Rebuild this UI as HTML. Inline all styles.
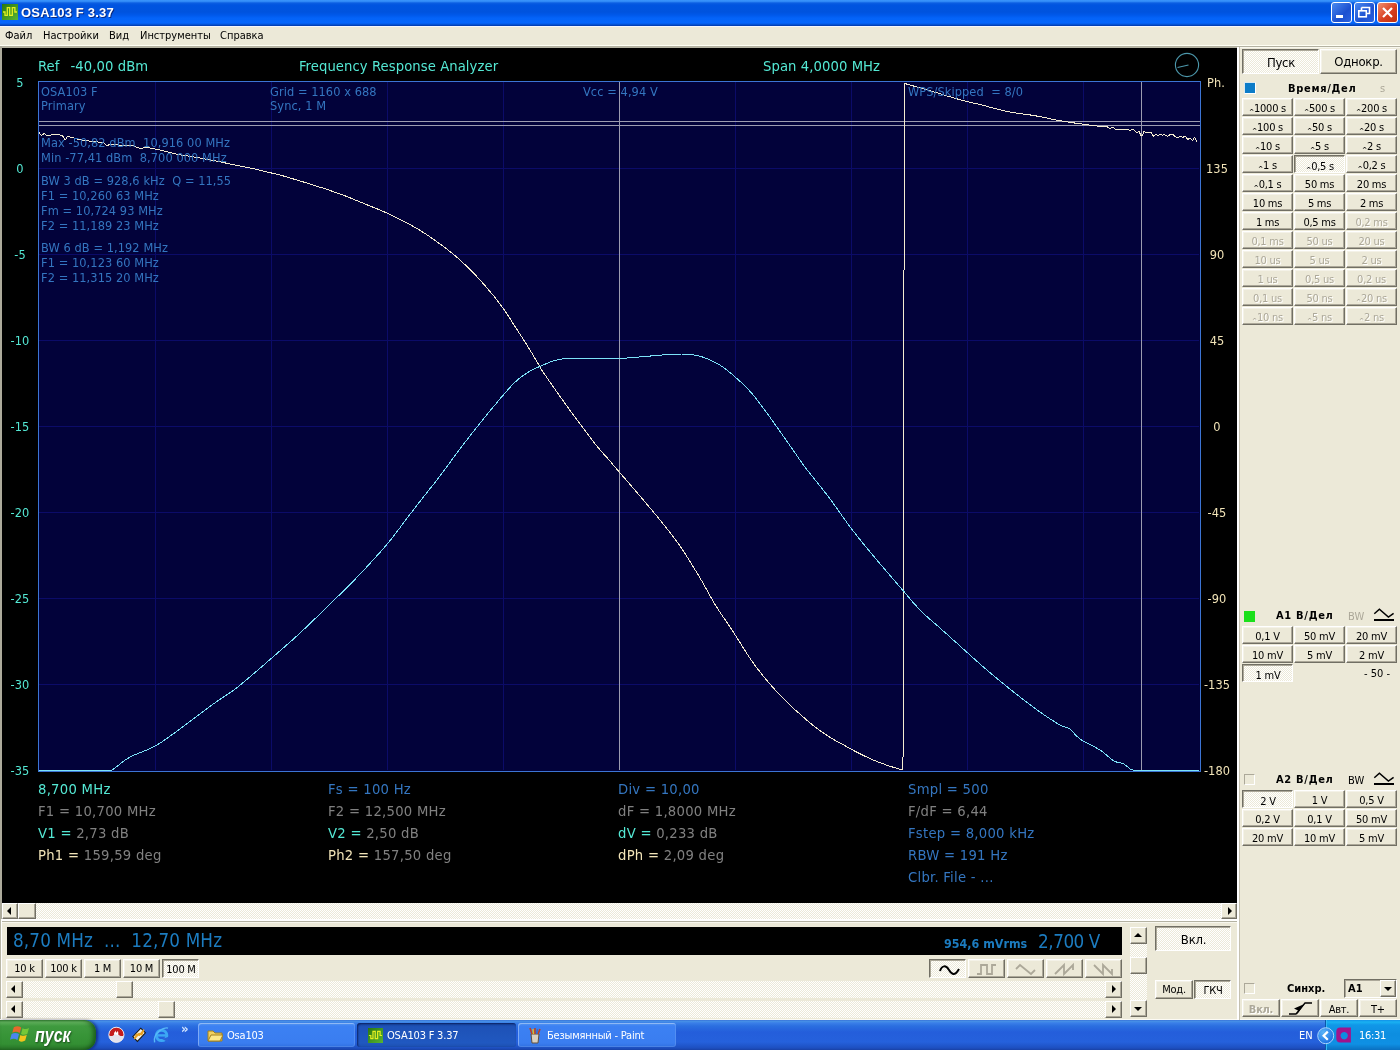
<!DOCTYPE html>
<html lang="ru"><head><meta charset="utf-8"><title>OSA103 F 3.37</title>
<style>
*{box-sizing:border-box;margin:0;padding:0}
html,body{width:1400px;height:1050px;overflow:hidden;background:#ece9d8}
body{position:relative;font-family:"DejaVu Sans Condensed","DejaVu Sans","Liberation Sans",sans-serif;font-size:11px;color:#000}
.abs,.b,.sb,.sbb{position:absolute}
/* title bar */
#title{left:0;top:0;width:1400px;height:26px;background:linear-gradient(#3c96fc 0,#2f88f6 1.5px,#0c5ee2 3px,#0054e0 5px,#0053de 12px,#0058ea 15px,#0463f8 18px,#0566fc 23px,#0452d4 24.5px,#0036a8 26px)}
#title .txt{left:21px;top:5px;color:#fff;font:bold 13px "Liberation Sans",sans-serif;letter-spacing:.2px;text-shadow:1px 1px 0 #0a2a80}
.wb{position:absolute;top:2px;width:21px;height:21px;border:1px solid #fff;border-radius:3px;background:linear-gradient(135deg,#4a8af0,#1c50d0 60%,#2a62e0)}
.wb.x{background:linear-gradient(135deg,#f09070,#d84020 55%,#c03010)}
/* menu */
#menu{left:0;top:26px;width:1400px;height:20px;background:#ece9d8}
#menu span{position:absolute;top:3px}
/* main black */
#scr{left:2px;top:48px;width:1235px;height:855px;background:#000}
svg.plot{position:absolute;left:0;top:0}
/* classic buttons */
.b{letter-spacing:-.25px;background:#ece9d8;border:1px solid;border-color:#fff #716f64 #716f64 #fff;box-shadow:inset -1px -1px 0 #aca899,inset 1px 1px 0 #f4f2e8;text-align:center;white-space:nowrap;font-size:11px;overflow:hidden}
.b.pr{background:#f6f5ee;border-color:#716f64 #fff #fff #716f64;box-shadow:inset 1px 1px 0 #aca899;padding:1px 0 0 1px;background-image:repeating-conic-gradient(#fff 0 25%,#ece9d8 0 50%);background-size:2px 2px}
.b.dis{color:#aca899;text-shadow:1px 1px 0 #fff}
.ca{font-size:7px;font-weight:bold;position:relative;top:2px;margin-right:0}
.lbl{position:absolute;font-weight:bold;font-size:11px;white-space:nowrap;letter-spacing:.35px}
/* scrollbars */
.sb{background-image:repeating-conic-gradient(#fff 0 25%,#ece9d8 0 50%);background-size:2px 2px}
.sbb{background:#ece9d8;border:1px solid;border-color:#fff #716f64 #716f64 #fff;box-shadow:inset -1px -1px 0 #aca899}
.ar{position:absolute;width:0;height:0;border:4px solid transparent}
.ar.l{border-right-color:#000;border-left-width:0;left:4px;top:3px}
.ar.r{border-left-color:#000;border-right-width:0;left:6px;top:3px}
.ar.u{border-bottom-color:#000;border-top-width:0;left:3px;top:5px}
.ar.d{border-top-color:#000;border-bottom-width:0;left:3px;top:6px}
/* taskbar */
#task{left:0;top:1020px;width:1400px;height:30px;background:linear-gradient(#3168d5 0,#4993e6 1px,#3a7fe8 3px,#2b6fe0 6px,#245edb 12px,#2561dc 22px,#1d4fc0 28px,#1941a5 30px)}
#start{left:0;top:0;width:96px;height:30px;border-radius:0 12px 12px 0;background:linear-gradient(#3c8c3c 0,#62b45e 2px,#3f9a3f 6px,#379437 16px,#338f33 24px,#2a772a 30px);box-shadow:inset -3px 0 4px rgba(0,40,0,.5), 2px 0 3px rgba(0,0,60,.5)}
#start .t{position:absolute;left:35px;top:4px;color:#fff;font:italic bold 20px "Liberation Sans",sans-serif;text-shadow:1px 1px 2px #1a4a1a;transform:scaleX(.8);transform-origin:0 0}
.tb{position:absolute;top:3px;height:24px;border-radius:3px;background:linear-gradient(#5a9af0 0,#3c81f3 3px,#3a7df0 20px,#2f6fe0 24px);box-shadow:inset 0 0 0 1px rgba(255,255,255,.12),inset 1px 1px 0 rgba(255,255,255,.25);color:#fff;font-size:11px;line-height:25px;letter-spacing:-.2px;padding-left:29px;white-space:nowrap}
.tb.act{background:linear-gradient(#1848a8 0,#1e52b7 4px,#2058c0 20px,#1c4fb0 24px);box-shadow:inset 1px 1px 2px rgba(0,0,40,.6)}
#tray{left:1325px;top:0;width:75px;height:30px;background:linear-gradient(#1290e8 0,#19b2f2 2px,#1097e8 5px,#0d8ee0 14px,#0f90e4 24px,#0a6fc0 30px);box-shadow:inset 1px 0 0 #0a58a8,inset 2px 0 0 #35b8f4}
#all{position:absolute;left:0;top:0;width:1400px;height:1050px;will-change:transform}
</style></head><body><div id="all">

<!-- title -->
<div id="title" class="abs">
 <svg class="abs" style="left:2px;top:4px" width="16" height="16" viewBox="0 0 16 16"><defs><linearGradient id="ig" x1="0" y1="0" x2="1" y2="1"><stop offset="0" stop-color="#2a7810"/><stop offset="1" stop-color="#58b434"/></linearGradient></defs><rect width="16" height="16" fill="url(#ig)"/><path d="M1 8 H3 V11.400 H5.300 V3.600 H7.700 V11.400 H10.300 V3.600 H12.900 V8 H15" fill="none" stroke="#e6f020" stroke-width="1.300"/></svg>
 <div class="abs txt">OSA103 F 3.37</div>
 <div class="wb" style="left:1331px"><svg width="19" height="19"><rect x="4" y="12" width="7" height="3" fill="#fff"/></svg></div>
 <div class="wb" style="left:1354px"><svg width="19" height="19"><path d="M6.5 4.5 h8 v6 h-3 M6.5 4.5 v3" fill="none" stroke="#fff" stroke-width="1.6"/><rect x="3.8" y="7.8" width="7.5" height="6" fill="none" stroke="#fff" stroke-width="1.6"/></svg></div>
 <div class="wb x" style="left:1377px"><svg width="19" height="19"><path d="M5 5 L14 14 M14 5 L5 14" stroke="#fff" stroke-width="2.2"/></svg></div>
</div>

<!-- menu -->
<div class="abs" style="left:0;top:26px;width:1400px;height:1px;background:#f4f6fc;z-index:2"></div>
<div id="menu" class="abs">
 <span style="left:5px">Файл</span><span style="left:43px">Настройки</span><span style="left:109px">Вид</span><span style="left:140px">Инструменты</span><span style="left:220px">Справка</span>
</div>
<div class="abs" style="left:0;top:45px;width:1400px;height:1px;background:#fffff4"></div>
<div class="abs" style="left:0;top:46px;width:1400px;height:1px;background:#b4b2a2"></div>
<div class="abs" style="left:0;top:47px;width:1237px;height:1px;background:#b4b2a2"></div>
<div class="abs" style="left:1237px;top:47px;width:163px;height:1px;background:#f8f7ee"></div>
<div class="abs" style="left:0;top:46px;width:2px;height:873px;background:#adab9c"></div>
<div class="abs" style="left:0;top:919px;width:1px;height:101px;background:#b8b6a6"></div>
<div class="abs" style="left:1px;top:919px;width:1px;height:101px;background:#fff"></div>
<div class="abs" style="left:0;top:1019px;width:1400px;height:1px;background:#fbfaf4"></div>

<!-- main display -->
<div id="scr" class="abs">
<svg class="plot" width="1236" height="855" viewBox="2 48 1236 855" shape-rendering="crispEdges">
<rect x="39" y="82" width="1161" height="689" fill="#02023a"/>
<rect x="155" y="82" width="1" height="688" fill="#0b0b68"/>
<rect x="271" y="82" width="1" height="688" fill="#0b0b68"/>
<rect x="387" y="82" width="1" height="688" fill="#0b0b68"/>
<rect x="503" y="82" width="1" height="688" fill="#0b0b68"/>
<rect x="619" y="82" width="1" height="688" fill="#0b0b68"/>
<rect x="735" y="82" width="1" height="688" fill="#0b0b68"/>
<rect x="851" y="82" width="1" height="688" fill="#0b0b68"/>
<rect x="967" y="82" width="1" height="688" fill="#0b0b68"/>
<rect x="1083" y="82" width="1" height="688" fill="#0b0b68"/>
<rect x="39" y="168" width="1160" height="1" fill="#0b0b68"/>
<rect x="39" y="254" width="1160" height="1" fill="#0b0b68"/>
<rect x="39" y="340" width="1160" height="1" fill="#0b0b68"/>
<rect x="39" y="426" width="1160" height="1" fill="#0b0b68"/>
<rect x="39" y="512" width="1160" height="1" fill="#0b0b68"/>
<rect x="39" y="598" width="1160" height="1" fill="#0b0b68"/>
<rect x="39" y="684" width="1160" height="1" fill="#0b0b68"/>
<rect x="38.5" y="81.5" width="1162" height="690" fill="none" stroke="#3c74d4" stroke-width="1"/>
<rect x="39" y="121" width="1161" height="1" fill="#9c9cb0"/>
<rect x="39" y="125" width="1161" height="1" fill="#9c9cb0"/>
<rect x="619" y="82" width="1" height="688" fill="#9c9cb0"/>
<rect x="1141" y="82" width="1" height="688" fill="#9c9cb0"/>
<g shape-rendering="crispEdges" fill="none" stroke-width="1" stroke-linejoin="round">
<polyline points="39.0,132.4 41.3,135.4 44.3,133.5 46.5,135.4 51.0,135.0 55.5,134.3 62.3,135.4 65.3,139.9 67.5,136.5 72.0,137.3 78.0,139.5 88.5,141.0 96.0,141.8 103.5,142.5 106.5,145.5 111.0,144.4 122.0,145.2 133.5,145.9 137.3,147.4 141.4,149.0 145.0,147.0 160.0,150.0 178.6,154.6 197.0,157.4 215.7,161.0 234.3,164.8 252.9,168.5 271.4,173.0 280.0,175.0 281.8,175.5 284.1,176.2 286.8,177.0 289.8,177.9 293.1,178.9 296.6,179.9 300.1,180.9 303.5,182.0 306.9,183.0 310.0,184.0 313.0,185.0 316.0,185.9 319.0,186.9 322.0,187.8 325.0,188.8 328.0,189.8 331.0,190.8 334.0,191.9 337.0,192.9 340.0,194.0 343.1,195.1 346.2,196.3 349.4,197.6 352.6,198.9 355.8,200.2 358.9,201.4 361.9,202.7 364.8,203.8 367.5,205.0 370.0,206.0 373.6,207.4 376.5,208.6 379.1,209.6 381.7,210.7 384.6,212.0 388.0,213.6 390.7,214.9 393.6,216.3 396.7,217.8 400.0,219.4 403.3,221.1 406.6,222.8 409.9,224.6 413.0,226.3 416.0,228.0 419.2,229.9 422.4,231.9 425.5,233.9 428.5,235.9 431.5,237.9 434.4,240.0 437.2,242.0 440.0,244.0 443.6,246.6 447.0,249.2 450.2,251.8 453.5,254.4 456.7,257.1 460.0,260.0 463.3,263.1 466.7,266.2 470.0,269.5 473.3,272.9 476.7,276.4 480.0,280.0 482.5,282.8 485.1,285.7 487.7,288.7 490.2,291.8 492.8,294.8 495.3,297.9 497.7,301.0 500.0,304.0 502.2,307.0 504.3,310.0 506.4,313.1 508.4,316.1 510.3,319.1 512.2,322.1 514.1,325.1 516.0,328.0 518.1,331.3 520.3,334.6 522.3,337.8 524.4,341.0 526.3,344.1 528.2,347.1 530.0,350.0 532.3,353.8 534.4,357.4 536.3,360.7 538.2,363.9 540.0,367.0 541.9,370.2 543.6,372.8 545.6,375.7 548.5,380.0 550.3,382.6 552.4,385.6 554.7,388.9 557.2,392.4 559.7,396.0 562.3,399.6 564.7,403.0 567.0,406.2 569.0,409.0 572.1,413.2 574.7,416.8 577.1,420.0 579.5,423.1 582.0,426.5 584.3,429.6 586.6,432.7 589.0,435.9 591.4,439.1 593.7,442.1 596.0,445.0 598.7,448.3 601.4,451.4 604.0,454.4 606.6,457.2 609.0,460.0 611.6,463.0 613.8,465.7 616.3,468.6 619.6,472.4 622.0,475.2 624.7,478.3 627.7,481.7 630.8,485.3 633.9,488.9 637.0,492.5 640.0,496.0 642.5,499.0 645.0,501.9 647.5,504.9 650.0,507.9 652.5,510.8 655.0,513.9 657.5,516.9 660.0,520.0 662.5,523.1 665.0,526.2 667.5,529.3 670.0,532.5 672.5,535.7 675.0,539.0 677.5,542.4 680.0,546.0 682.0,549.0 684.1,552.1 686.1,555.3 688.2,558.6 690.2,561.9 692.3,565.2 694.3,568.5 696.3,571.8 698.2,574.9 700.0,578.0 702.0,581.3 703.8,584.6 705.6,587.8 707.4,590.9 709.1,594.0 710.8,597.1 712.5,600.1 714.2,603.1 716.0,606.0 718.0,609.1 719.9,612.1 721.9,615.0 723.8,617.9 725.8,620.7 727.8,623.7 729.8,626.7 732.0,630.0 733.8,632.8 735.7,635.8 737.7,638.9 739.7,642.1 741.7,645.4 743.7,648.6 745.7,651.7 747.7,654.8 749.6,657.6 751.4,660.3 754.2,664.3 756.9,667.9 759.5,671.3 762.0,674.5 764.5,677.6 767.1,680.7 770.2,684.4 773.4,688.0 776.5,691.4 779.7,694.7 782.8,698.0 786.0,701.2 789.1,704.2 792.3,707.2 795.4,710.1 798.6,712.9 801.7,715.7 804.9,718.5 808.0,721.2 811.2,723.8 814.3,726.3 817.4,728.7 820.5,730.9 823.6,733.1 826.8,735.2 830.0,737.3 833.4,739.4 837.0,741.4 840.5,743.3 844.0,745.2 847.3,747.0 851.0,749.0 854.4,750.9 857.8,752.7 861.4,754.5 864.4,756.0 867.6,757.4 870.7,758.9 873.9,760.3 877.1,761.6 880.3,762.8 883.6,764.0 886.9,765.2 890.0,766.2 892.8,767.1 897.0,768.4 900.6,769.3 903.0,770.0 904.4,83.4 906.2,83.9 908.6,84.6 911.4,85.4 914.6,86.3 918.0,87.2 921.5,88.2 925.0,89.2 928.3,90.2 931.4,91.1 934.7,92.1 937.9,93.1 941.1,94.1 944.3,95.1 947.5,96.1 950.7,97.0 953.9,98.0 957.1,98.9 960.3,99.8 963.5,100.6 966.8,101.4 970.0,102.2 973.2,103.0 976.5,103.7 979.7,104.5 982.9,105.3 986.1,106.1 989.3,107.0 992.5,107.8 995.8,108.7 999.0,109.5 1002.2,110.3 1005.4,111.0 1008.6,111.7 1011.8,112.3 1015.0,112.8 1018.2,113.3 1021.5,113.7 1024.7,114.2 1027.9,114.6 1031.1,115.1 1034.3,115.6 1037.5,116.2 1040.7,116.8 1043.9,117.5 1047.1,118.1 1050.4,118.8 1053.6,119.5 1056.8,120.1 1060.0,120.7 1063.3,121.3 1066.7,121.8 1070.1,122.3 1073.6,122.9 1076.9,123.3 1080.1,123.8 1083.0,124.2 1085.7,124.6 1090.4,125.2 1094.5,125.7 1097.7,126.1 1100.0,126.4 1106.8,126.4 1109.8,128.6 1113.1,127.1 1115.8,129.4 1128.5,129.4 1130.0,130.5 1133.0,129.2 1136.8,132.8 1139.0,131.3 1140.9,135.4 1142.4,135.4 1143.9,131.3 1145.8,132.4 1151.0,132.4 1153.6,136.5 1155.5,134.6 1157.8,135.4 1160.8,134.3 1162.3,135.4 1163.8,134.3 1167.5,136.5 1170.5,134.3 1172.8,134.4 1175.0,136.5 1177.3,137.6 1181.0,136.1 1182.5,137.6 1185.1,136.1 1187.8,139.5 1190.0,138.0 1192.6,140.6 1194.5,137.3 1196.8,141.8" stroke="#f4ecd0"/>
<polyline points="39.0,770.0 112.0,770.0 114.3,768.6 116.3,767.0 119.0,764.8 122.2,762.2 126.0,759.5 130.0,757.0 132.7,755.6 135.7,754.4 138.8,753.1 142.0,751.9 145.4,750.6 148.8,749.1 152.3,747.5 155.7,745.7 158.8,743.9 161.9,741.9 165.0,739.7 168.2,737.5 171.4,735.2 174.7,732.8 177.9,730.4 181.1,728.0 184.3,725.7 187.5,723.4 190.8,720.9 194.0,718.5 197.3,716.0 200.6,713.5 203.8,711.1 206.9,708.7 210.0,706.4 212.9,704.3 216.5,701.7 220.0,699.4 223.4,697.1 226.6,694.9 229.8,692.8 232.8,690.7 235.7,688.6 239.5,685.7 242.8,682.9 246.1,680.2 249.4,677.3 252.9,674.3 256.0,671.7 259.1,669.0 262.4,666.2 265.7,663.3 269.2,660.2 272.9,657.0 275.8,654.5 278.9,651.8 282.0,649.1 285.2,646.3 288.5,643.4 291.9,640.4 295.2,637.4 298.6,634.3 301.6,631.5 304.7,628.6 307.9,625.6 311.0,622.5 314.2,619.5 317.4,616.4 320.6,613.2 323.8,610.1 327.0,607.0 330.2,603.9 333.3,600.9 336.4,597.8 339.6,594.8 342.7,591.7 345.9,588.5 349.1,585.3 352.4,582.0 355.7,578.6 358.5,575.7 361.3,572.7 364.3,569.6 367.2,566.4 370.2,563.2 373.2,559.9 376.1,556.7 379.0,553.5 381.8,550.4 384.5,547.3 387.0,544.3 389.6,541.1 392.2,538.0 394.6,534.8 396.9,531.8 399.2,528.8 401.4,525.8 403.6,522.8 405.7,520.0 407.9,517.1 410.0,514.3 412.7,510.8 415.5,507.2 418.3,503.6 421.0,500.1 423.6,496.8 426.0,493.7 428.1,491.0 430.0,488.6 433.0,485.1 437.0,480.0 438.6,477.8 440.5,475.3 442.7,472.4 445.0,469.2 447.4,465.9 450.0,462.4 452.6,458.8 455.3,455.2 458.0,451.5 460.7,448.0 463.2,444.6 465.7,441.4 468.3,438.0 471.0,434.6 473.7,431.1 476.5,427.7 479.2,424.2 481.9,420.9 484.5,417.6 487.1,414.4 489.6,411.4 492.0,408.4 494.3,405.7 497.7,401.7 500.8,397.9 503.8,394.4 506.6,391.2 509.3,388.2 511.8,385.4 514.3,382.9 518.3,379.2 521.8,376.5 525.2,374.2 528.6,372.0 532.2,370.0 535.8,368.2 539.3,366.6 542.9,365.1 546.4,363.6 549.8,362.2 553.3,361.0 557.0,360.0 559.8,359.4 562.3,359.0 565.2,358.7 569.0,358.5 574.3,358.3 576.5,358.3 579.1,358.2 581.8,358.2 584.7,358.2 587.9,358.3 591.1,358.3 594.4,358.3 597.8,358.4 601.2,358.4 604.6,358.4 607.9,358.4 611.1,358.4 614.3,358.4 617.2,358.4 620.0,358.3 623.6,358.2 627.2,358.0 630.6,357.7 634.0,357.5 637.3,357.2 640.5,356.9 643.6,356.7 646.5,356.4 649.3,356.1 651.9,355.9 654.3,355.7 658.8,355.3 662.4,355.0 665.4,354.7 668.2,354.5 671.4,354.3 674.9,354.2 678.4,354.1 681.9,354.0 685.3,354.1 688.6,354.3 692.3,354.7 695.8,355.2 699.2,356.0 702.9,357.1 706.1,358.3 709.5,359.7 713.0,361.3 716.5,363.1 720.0,365.1 723.4,367.4 726.9,370.1 730.4,372.9 733.8,375.8 737.0,378.6 740.8,382.0 744.4,385.4 747.9,389.0 751.4,392.9 753.8,395.7 756.2,398.7 758.6,401.8 760.9,405.0 763.3,408.2 765.7,411.4 768.1,414.7 770.5,418.0 772.9,421.4 775.3,424.8 777.7,428.1 780.0,431.4 782.2,434.6 784.4,437.7 786.6,440.8 788.7,443.9 790.9,447.0 793.0,450.0 795.0,452.9 796.9,455.6 798.7,458.4 800.7,461.2 803.0,464.4 805.7,468.0 807.8,470.7 810.1,473.7 812.6,476.8 815.2,480.0 817.9,483.3 820.6,486.7 823.3,490.2 826.0,493.6 828.6,497.0 830.9,500.1 833.2,503.2 835.4,506.4 837.7,509.6 840.0,512.8 842.3,516.1 844.6,519.3 846.8,522.4 849.1,525.6 851.4,528.6 853.9,531.9 856.4,535.1 858.9,538.2 861.4,541.4 863.9,544.4 866.5,547.5 869.0,550.6 871.6,553.8 874.3,557.0 876.8,560.0 879.4,563.0 882.0,566.1 884.7,569.2 887.3,572.3 890.0,575.4 892.6,578.5 895.2,581.4 897.6,584.3 900.0,587.0 903.2,590.7 906.1,594.2 909.0,597.6 911.7,600.9 914.5,604.0 917.2,607.0 920.0,610.0 923.3,613.3 926.7,616.4 930.0,619.3 933.3,622.2 936.7,625.1 940.0,628.0 943.3,631.0 946.7,634.0 950.0,637.0 953.3,640.0 956.7,643.0 960.0,646.0 963.3,649.0 966.7,652.0 970.0,655.1 973.3,658.1 976.7,661.1 980.0,664.0 983.3,666.9 986.7,669.8 990.0,672.6 993.3,675.4 996.7,678.2 1000.0,681.0 1003.3,683.7 1006.7,686.4 1010.0,689.1 1013.3,691.8 1016.7,694.4 1020.0,697.0 1023.3,699.6 1026.7,702.1 1030.0,704.7 1033.3,707.2 1036.7,709.6 1040.0,712.0 1043.4,714.4 1047.0,716.8 1050.6,719.2 1054.1,721.4 1057.2,723.4 1060.0,725.0 1064.1,726.8 1067.0,727.6 1070.0,729.0 1073.0,731.9 1075.9,735.4 1080.0,739.0 1082.8,740.8 1086.1,742.6 1089.8,744.4 1093.4,746.3 1096.9,748.2 1100.0,750.0 1104.0,752.9 1107.6,756.0 1110.9,758.8 1114.0,761.0 1117.8,762.5 1121.1,763.1 1124.0,764.0 1127.4,766.6 1130.0,769.0 1133.0,770.0 1199.0,770.0" stroke="#7ce2f8" stroke-width="1"/>
</g><g shape-rendering="auto" fill="none">
<circle cx="1187" cy="65" r="11.6" stroke="#4c98ac" stroke-width="1.1"/>
<path d="M1177.500 67.500 L1188.500 65" stroke="#4c98ac" stroke-width="1.1"/>
</g>
<g font-family='&quot;DejaVu Sans Condensed&quot;,&quot;DejaVu Sans&quot;,&quot;Liberation Sans&quot;,sans-serif' shape-rendering="auto" letter-spacing="0.08">
<text x="38" y="71" fill="#54e8d4" font-size="14.67" text-anchor="start" >Ref</text>
<text x="70.5" y="71" fill="#54e8d4" font-size="14.67" text-anchor="start" >-40,00 dBm</text>
<text x="299" y="71" fill="#54e8d4" font-size="14.67" text-anchor="start" >Frequency Response Analyzer</text>
<text x="763" y="71" fill="#54e8d4" font-size="14.67" text-anchor="start" >Span 4,0000 MHz</text>
<text x="20" y="87" fill="#54e8d4" font-size="12.67" text-anchor="middle" >5</text>
<text x="20" y="173" fill="#54e8d4" font-size="12.67" text-anchor="middle" >0</text>
<text x="20" y="259" fill="#54e8d4" font-size="12.67" text-anchor="middle" >-5</text>
<text x="20" y="345" fill="#54e8d4" font-size="12.67" text-anchor="middle" >-10</text>
<text x="20" y="431" fill="#54e8d4" font-size="12.67" text-anchor="middle" >-15</text>
<text x="20" y="517" fill="#54e8d4" font-size="12.67" text-anchor="middle" >-20</text>
<text x="20" y="603" fill="#54e8d4" font-size="12.67" text-anchor="middle" >-25</text>
<text x="20" y="689" fill="#54e8d4" font-size="12.67" text-anchor="middle" >-30</text>
<text x="20" y="775" fill="#54e8d4" font-size="12.67" text-anchor="middle" >-35</text>
<text x="1207" y="87" fill="#f2e4b8" font-size="12.67" text-anchor="start" >Ph.</text>
<text x="1217" y="173" fill="#f2e4b8" font-size="12.67" text-anchor="middle" >135</text>
<text x="1217" y="259" fill="#f2e4b8" font-size="12.67" text-anchor="middle" >90</text>
<text x="1217" y="345" fill="#f2e4b8" font-size="12.67" text-anchor="middle" >45</text>
<text x="1217" y="431" fill="#f2e4b8" font-size="12.67" text-anchor="middle" >0</text>
<text x="1217" y="517" fill="#f2e4b8" font-size="12.67" text-anchor="middle" >-45</text>
<text x="1217" y="603" fill="#f2e4b8" font-size="12.67" text-anchor="middle" >-90</text>
<text x="1217" y="689" fill="#f2e4b8" font-size="12.67" text-anchor="middle" >-135</text>
<text x="1217" y="775" fill="#f2e4b8" font-size="12.67" text-anchor="middle" >-180</text>
<text x="41" y="96" fill="#3476c0" font-size="12.67" text-anchor="start" >OSA103 F</text>
<text x="41" y="110" fill="#3476c0" font-size="12.67" text-anchor="start" >Primary</text>
<text x="270" y="96" fill="#3476c0" font-size="12.67" text-anchor="start" >Grid = 1160 x 688</text>
<text x="270" y="110" fill="#3476c0" font-size="12.67" text-anchor="start" >Sync, 1 M</text>
<text x="583" y="96" fill="#3476c0" font-size="12.67" text-anchor="start" >Vcc = 4,94 V</text>
<text x="908" y="96" fill="#3476c0" font-size="12.67" text-anchor="start" >WPS/Skipped&#160; = 8/0</text>
<text x="41" y="147" fill="#3476c0" font-size="12.67" text-anchor="start" >Max -50,82 dBm&#160; 10,916 00 MHz</text>
<text x="41" y="162" fill="#3476c0" font-size="12.67" text-anchor="start" >Min -77,41 dBm&#160; 8,700 000 MHz</text>
<text x="41" y="185" fill="#3476c0" font-size="12.67" text-anchor="start" >BW 3 dB = 928,6 kHz&#160; Q = 11,55</text>
<text x="41" y="200" fill="#3476c0" font-size="12.67" text-anchor="start" >F1 = 10,260 63 MHz</text>
<text x="41" y="215" fill="#3476c0" font-size="12.67" text-anchor="start" >Fm = 10,724 93 MHz</text>
<text x="41" y="230" fill="#3476c0" font-size="12.67" text-anchor="start" >F2 = 11,189 23 MHz</text>
<text x="41" y="252" fill="#3476c0" font-size="12.67" text-anchor="start" >BW 6 dB = 1,192 MHz</text>
<text x="41" y="267" fill="#3476c0" font-size="12.67" text-anchor="start" >F1 = 10,123 60 MHz</text>
<text x="41" y="282" fill="#3476c0" font-size="12.67" text-anchor="start" >F2 = 11,315 20 MHz</text>
<text x="38" y="794" fill="#54e8d4" font-size="14.67" text-anchor="start" letter-spacing="0.27">8,700 MHz</text>
<text x="38" y="816" fill="#808080" font-size="14.67" text-anchor="start" letter-spacing="0.27">F1 = 10,700 MHz</text>
<text x="38" y="838" fill="#808080" font-size="14.67" text-anchor="start" letter-spacing="0.27"><tspan fill="#54e8d4">V1 =</tspan> 2,73 dB</text>
<text x="38" y="860" fill="#808080" font-size="14.67" text-anchor="start" letter-spacing="0.27"><tspan fill="#f2e4b8">Ph1 =</tspan> 159,59 deg</text>
<text x="328" y="794" fill="#3476c0" font-size="14.67" text-anchor="start" letter-spacing="0.27">Fs = 100 Hz</text>
<text x="328" y="816" fill="#808080" font-size="14.67" text-anchor="start" letter-spacing="0.27">F2 = 12,500 MHz</text>
<text x="328" y="838" fill="#808080" font-size="14.67" text-anchor="start" letter-spacing="0.27"><tspan fill="#54e8d4">V2 =</tspan> 2,50 dB</text>
<text x="328" y="860" fill="#808080" font-size="14.67" text-anchor="start" letter-spacing="0.27"><tspan fill="#f2e4b8">Ph2 =</tspan> 157,50 deg</text>
<text x="618" y="794" fill="#3476c0" font-size="14.67" text-anchor="start" letter-spacing="0.27">Div = 10,00</text>
<text x="618" y="816" fill="#808080" font-size="14.67" text-anchor="start" letter-spacing="0.27">dF = 1,8000 MHz</text>
<text x="618" y="838" fill="#808080" font-size="14.67" text-anchor="start" letter-spacing="0.27"><tspan fill="#54e8d4">dV =</tspan> 0,233 dB</text>
<text x="618" y="860" fill="#808080" font-size="14.67" text-anchor="start" letter-spacing="0.27"><tspan fill="#f2e4b8">dPh =</tspan> 2,09 deg</text>
<text x="908" y="794" fill="#3476c0" font-size="14.67" text-anchor="start" letter-spacing="0.27">Smpl = 500</text>
<text x="908" y="816" fill="#808080" font-size="14.67" text-anchor="start" letter-spacing="0.27">F/dF = 6,44</text>
<text x="908" y="838" fill="#3476c0" font-size="14.67" text-anchor="start" letter-spacing="0.27">Fstep = 8,000 kHz</text>
<text x="908" y="860" fill="#3476c0" font-size="14.67" text-anchor="start" letter-spacing="0.27">RBW = 191 Hz</text>
<text x="908" y="882" fill="#3476c0" font-size="14.67" text-anchor="start" letter-spacing="0.27">Clbr. File - ...</text>
</g>
</svg>
</div>

<!-- horizontal scrollbar under display -->
<div class="sb" style="left:2px;top:903px;width:1235px;height:16px"></div>
<div class="sbb" style="left:2px;top:903px;width:16px;height:16px"><i class="ar l"></i></div>
<div class="sbb" style="left:18px;top:903px;width:18px;height:16px"></div>
<div class="sbb" style="left:1221px;top:903px;width:16px;height:16px"><i class="ar r"></i></div>
<div class="abs" style="left:2px;top:919px;width:1236px;height:2px;background:#fff"></div>
<div class="abs" style="left:2px;top:921px;width:1236px;height:1px;background:#b4b2a2"></div>
<div class="abs" style="left:2px;top:922px;width:1236px;height:1px;background:#f8f7ee"></div>

<!-- generator panel -->
<div class="abs" style="left:7px;top:927px;width:1115px;height:28px;background:#000"></div>
<div class="abs" style="left:13px;top:930px;color:#1c7cc0;font-size:18.7px;letter-spacing:.15px;white-space:nowrap">8,70 MHz&#160; ...&#160; 12,70 MHz</div>
<div class="abs" style="left:944px;top:936px;color:#1c7cc0;font-size:12.4px;font-weight:bold;white-space:nowrap">954,6 mVrms</div>
<div class="abs" style="left:1038px;top:931px;color:#1c7cc0;font-size:18.7px;letter-spacing:-.45px;white-space:nowrap">2,700 V</div>

<div class="b" style="left:6px;top:959px;width:37px;height:19px;line-height:17px">10 k</div>
<div class="b" style="left:45px;top:959px;width:37px;height:19px;line-height:17px">100 k</div>
<div class="b" style="left:84px;top:959px;width:37px;height:19px;line-height:17px">1 M</div>
<div class="b" style="left:123px;top:959px;width:37px;height:19px;line-height:17px">10 M</div>
<div class="b pr" style="left:162px;top:959px;width:37px;height:19px;line-height:17px">100 M</div>

<!-- waveform buttons -->
<div class="b pr" style="left:929px;top:959px;width:37px;height:19px"><svg width="35" height="18"><path d="M9 10 C11 4,15 4,18 9 S24 15,28 8" fill="none" stroke="#000" stroke-width="2"/></svg></div>
<div class="b" style="left:968px;top:959px;width:37px;height:19px"><svg width="35" height="18"><path d="M8 14 h4 v-9 h6 v9 h5 v-9 h4" fill="none" stroke="#aca899" stroke-width="1.8"/></svg></div>
<div class="b" style="left:1007px;top:959px;width:37px;height:19px"><svg width="35" height="18"><path d="M8 9 l4 -4 l11 9 l4 -4" fill="none" stroke="#aca899" stroke-width="1.8"/></svg></div>
<div class="b" style="left:1046px;top:959px;width:37px;height:19px"><svg width="35" height="18"><path d="M8 14 l9 -9 v9 l9 -9 v5" fill="none" stroke="#aca899" stroke-width="1.8"/></svg></div>
<div class="b" style="left:1085px;top:959px;width:37px;height:19px"><svg width="35" height="18"><path d="M8 5 l9 9 v-9 l9 9 v-5" fill="none" stroke="#aca899" stroke-width="1.8"/></svg></div>

<!-- two scrollbars -->
<div class="sb" style="left:6px;top:981px;width:1116px;height:17px"></div>
<div class="sbb" style="left:6px;top:981px;width:17px;height:17px"><i class="ar l"></i></div>
<div class="sbb" style="left:116px;top:981px;width:17px;height:17px"></div>
<div class="sbb" style="left:1105px;top:981px;width:17px;height:17px"><i class="ar r"></i></div>
<div class="sb" style="left:6px;top:1001px;width:1116px;height:17px"></div>
<div class="sbb" style="left:6px;top:1001px;width:17px;height:17px"><i class="ar l"></i></div>
<div class="sbb" style="left:158px;top:1001px;width:17px;height:17px"></div>
<div class="sbb" style="left:1105px;top:1001px;width:17px;height:17px"><i class="ar r"></i></div>

<!-- vertical scrollbar -->
<div class="sb" style="left:1130px;top:927px;width:17px;height:90px"></div>
<div class="sbb" style="left:1130px;top:927px;width:17px;height:17px"><i class="ar u"></i></div>
<div class="sbb" style="left:1130px;top:957px;width:17px;height:17px"></div>
<div class="sbb" style="left:1130px;top:1000px;width:17px;height:17px"><i class="ar d"></i></div>

<div class="b pr" style="left:1155px;top:926px;width:76px;height:25px;line-height:23px;font-size:13px">Вкл.</div>
<div class="b" style="left:1155px;top:980px;width:38px;height:19px;line-height:17px">Мод.</div>
<div class="b pr" style="left:1194px;top:980px;width:37px;height:19px;line-height:17px">ГКЧ</div>

<!-- right panel -->
<div class="abs" style="left:1237px;top:47px;width:2px;height:973px;background:#fff"></div>
<div class="abs" style="left:1239px;top:47px;width:1px;height:973px;background:#c4c0b0"></div>
<div class="b pr" style="left:1242px;top:49px;width:77px;height:25px;line-height:23px;font-size:13px">Пуск</div>
<div class="b" style="left:1320px;top:49px;width:77px;height:25px;line-height:23px;font-size:13px">Однокр.</div>
<div class="abs" style="left:1244px;top:82px;width:12px;height:12px;background:#0c7cc8;border:1px solid;border-color:#d8e8f0 #fff #fff #d8e8f0"></div>
<div class="lbl" style="left:1288px;top:82px;letter-spacing:.7px">Время/Дел</div>
<div class="abs" style="left:1380px;top:82px;color:#aca899">s</div>
<div class="b " style="left:1242px;top:98px;width:51px;height:18px;line-height:19px"><span class="ca">^</span>1000 s</div>
<div class="b " style="left:1294px;top:98px;width:51px;height:18px;line-height:19px"><span class="ca">^</span>500 s</div>
<div class="b " style="left:1346px;top:98px;width:51px;height:18px;line-height:19px"><span class="ca">^</span>200 s</div>
<div class="b " style="left:1242px;top:117px;width:51px;height:18px;line-height:19px"><span class="ca">^</span>100 s</div>
<div class="b " style="left:1294px;top:117px;width:51px;height:18px;line-height:19px"><span class="ca">^</span>50 s</div>
<div class="b " style="left:1346px;top:117px;width:51px;height:18px;line-height:19px"><span class="ca">^</span>20 s</div>
<div class="b " style="left:1242px;top:136px;width:51px;height:18px;line-height:19px"><span class="ca">^</span>10 s</div>
<div class="b " style="left:1294px;top:136px;width:51px;height:18px;line-height:19px"><span class="ca">^</span>5 s</div>
<div class="b " style="left:1346px;top:136px;width:51px;height:18px;line-height:19px"><span class="ca">^</span>2 s</div>
<div class="b " style="left:1242px;top:155px;width:51px;height:18px;line-height:19px"><span class="ca">^</span>1 s</div>
<div class="b pr" style="left:1294px;top:155px;width:51px;height:18px;line-height:19px"><span class="ca">^</span>0,5 s</div>
<div class="b " style="left:1346px;top:155px;width:51px;height:18px;line-height:19px"><span class="ca">^</span>0,2 s</div>
<div class="b " style="left:1242px;top:174px;width:51px;height:18px;line-height:19px"><span class="ca">^</span>0,1 s</div>
<div class="b " style="left:1294px;top:174px;width:51px;height:18px;line-height:19px">50 ms</div>
<div class="b " style="left:1346px;top:174px;width:51px;height:18px;line-height:19px">20 ms</div>
<div class="b " style="left:1242px;top:193px;width:51px;height:18px;line-height:19px">10 ms</div>
<div class="b " style="left:1294px;top:193px;width:51px;height:18px;line-height:19px">5 ms</div>
<div class="b " style="left:1346px;top:193px;width:51px;height:18px;line-height:19px">2 ms</div>
<div class="b " style="left:1242px;top:212px;width:51px;height:18px;line-height:19px">1 ms</div>
<div class="b " style="left:1294px;top:212px;width:51px;height:18px;line-height:19px">0,5 ms</div>
<div class="b dis" style="left:1346px;top:212px;width:51px;height:18px;line-height:19px">0,2 ms</div>
<div class="b dis" style="left:1242px;top:231px;width:51px;height:18px;line-height:19px">0,1 ms</div>
<div class="b dis" style="left:1294px;top:231px;width:51px;height:18px;line-height:19px">50 us</div>
<div class="b dis" style="left:1346px;top:231px;width:51px;height:18px;line-height:19px">20 us</div>
<div class="b dis" style="left:1242px;top:250px;width:51px;height:18px;line-height:19px">10 us</div>
<div class="b dis" style="left:1294px;top:250px;width:51px;height:18px;line-height:19px">5 us</div>
<div class="b dis" style="left:1346px;top:250px;width:51px;height:18px;line-height:19px">2 us</div>
<div class="b dis" style="left:1242px;top:269px;width:51px;height:18px;line-height:19px">1 us</div>
<div class="b dis" style="left:1294px;top:269px;width:51px;height:18px;line-height:19px">0,5 us</div>
<div class="b dis" style="left:1346px;top:269px;width:51px;height:18px;line-height:19px">0,2 us</div>
<div class="b dis" style="left:1242px;top:288px;width:51px;height:18px;line-height:19px">0,1 us</div>
<div class="b dis" style="left:1294px;top:288px;width:51px;height:18px;line-height:19px">50 ns</div>
<div class="b dis" style="left:1346px;top:288px;width:51px;height:18px;line-height:19px"><span class="ca">^</span>20 ns</div>
<div class="b dis" style="left:1242px;top:307px;width:51px;height:18px;line-height:19px"><span class="ca">^</span>10 ns</div>
<div class="b dis" style="left:1294px;top:307px;width:51px;height:18px;line-height:19px"><span class="ca">^</span>5 ns</div>
<div class="b dis" style="left:1346px;top:307px;width:51px;height:18px;line-height:19px"><span class="ca">^</span>2 ns</div>
<div class="b " style="left:1242px;top:626px;width:51px;height:18px;line-height:19px">0,1 V</div>
<div class="b " style="left:1294px;top:626px;width:51px;height:18px;line-height:19px">50 mV</div>
<div class="b " style="left:1346px;top:626px;width:51px;height:18px;line-height:19px">20 mV</div>
<div class="b " style="left:1242px;top:645px;width:51px;height:18px;line-height:19px">10 mV</div>
<div class="b " style="left:1294px;top:645px;width:51px;height:18px;line-height:19px">5 mV</div>
<div class="b " style="left:1346px;top:645px;width:51px;height:18px;line-height:19px">2 mV</div>
<div class="b pr" style="left:1242px;top:664px;width:51px;height:18px;line-height:19px">1 mV</div>
<div class="b pr" style="left:1242px;top:790px;width:51px;height:18px;line-height:19px">2 V</div>
<div class="b " style="left:1294px;top:790px;width:51px;height:18px;line-height:19px">1 V</div>
<div class="b " style="left:1346px;top:790px;width:51px;height:18px;line-height:19px">0,5 V</div>
<div class="b " style="left:1242px;top:809px;width:51px;height:18px;line-height:19px">0,2 V</div>
<div class="b " style="left:1294px;top:809px;width:51px;height:18px;line-height:19px">0,1 V</div>
<div class="b " style="left:1346px;top:809px;width:51px;height:18px;line-height:19px">50 mV</div>
<div class="b " style="left:1242px;top:828px;width:51px;height:18px;line-height:19px">20 mV</div>
<div class="b " style="left:1294px;top:828px;width:51px;height:18px;line-height:19px">10 mV</div>
<div class="b " style="left:1346px;top:828px;width:51px;height:18px;line-height:19px">5 mV</div>
<div class="abs" style="left:1244px;top:611px;width:11px;height:11px;background:#1be01b"></div>
<div class="lbl" style="left:1276px;top:609px;letter-spacing:.7px">A1 В/Дел</div>
<div class="abs" style="left:1348px;top:610px;color:#aca899">BW</div>
<svg class="abs" style="left:1373px;top:607px" width="22" height="14"><path d="M1.300 6.700 L6.400 2.200 L15.400 10.100 L20.600 6.300" fill="none" stroke="#000" stroke-width="1.500"/><path d="M1 13 h20" stroke="#000" stroke-width="2"/></svg>
<div class="abs" style="left:1364px;top:667px">- 50 -</div>

<div class="abs" style="left:1244px;top:774px;width:11px;height:11px;border:1px solid;border-color:#aca899 #fff #fff #aca899;background:#ece9d8"></div>
<div class="lbl" style="left:1276px;top:773px;letter-spacing:.7px">A2 В/Дел</div>
<div class="abs" style="left:1348px;top:774px">BW</div>
<svg class="abs" style="left:1373px;top:771px" width="22" height="14"><path d="M1.300 6.700 L6.400 2.200 L15.400 10.100 L20.600 6.300" fill="none" stroke="#000" stroke-width="1.500"/><path d="M1 13 h20" stroke="#000" stroke-width="2"/></svg>

<div class="abs" style="left:1244px;top:983px;width:11px;height:11px;border:1px solid;border-color:#aca899 #fff #fff #aca899;background:#ece9d8"></div>
<div class="lbl" style="left:1287px;top:982px;letter-spacing:0">Синхр.</div>
<div class="abs" style="left:1344px;top:979px;width:53px;height:19px;border:1px solid;border-color:#716f64 #fff #fff #716f64;box-shadow:inset 1px 1px 0 #aca899;background:#ece9d8"><b style="position:absolute;left:3px;top:2px">A1</b></div>
<div class="sbb" style="left:1380px;top:980px;width:16px;height:17px"><i class="ar d" style="left:3px;top:6px"></i></div>
<div class="b dis" style="left:1242px;top:999px;width:38px;height:18px;line-height:19px;font-weight:bold">Вкл.</div>
<div class="b" style="left:1281px;top:999px;width:38px;height:18px"><svg width="36" height="16"><path d="M7 14 h7 l9 -11 h7" fill="none" stroke="#000" stroke-width="1.3"/><path d="M22.500 4 L12 8.500 L16 10.500 L15 14.500 Z" fill="#000"/></svg></div>
<div class="b" style="left:1320px;top:999px;width:38px;height:18px;line-height:19px">Авт.</div>
<div class="b" style="left:1359px;top:999px;width:38px;height:18px;line-height:19px">T+</div>

<!-- taskbar -->
<div id="task" class="abs">
 <div id="start" class="abs">
  <svg class="abs" style="left:9px;top:4px" width="22" height="20" viewBox="9 1024 22 20"><path d="M13.8 1027.2 q3.8 -2 7.4 0.2 l-1.5 5.6 q-3.6 -2.2 -7.4 -.2z" fill="#e8682c"/><path d="M22.6 1028.2 q3.2 1.8 6.4 -.2 l-1.6 5.8 q-3.2 2 -6.4 .2z" fill="#74c838"/><path d="M11.6 1033.9 q3.8 -2 7.4 0.2 l-1.6 5.8 q-3.6 -2.2 -7.4 -.2z" fill="#4a86ee"/><path d="M20.4 1035 q3.2 1.8 6.4 -.2 l-1.6 5.8 q-3.2 2 -6.4 .2z" fill="#f2c41c"/></svg>
  <div class="t">пуск</div>
 </div>
 <svg class="abs" style="left:100px;top:0" width="100" height="30" viewBox="100 1020 100 30"><circle cx="116.4" cy="1034.8" r="7.6" fill="#e4e2ea"/><path d="M108.8 1035.2 a7.6 7.6 0 0 1 15.2 0 q-2.4 1.6 -4.4 .2 q-1.6 -1.4 -3.2 -1.4 q-1.8 0 -3.2 1.4 q-2 1.4 -4.4 -.2z" fill="#c41c1c"/><path d="M114.2 1035 q-.6 -2.6 1.6 -4.6 q-.2 1.8 .8 2.4 q.4 -1.4 1.2 -1.8 q1.2 2.4 .2 4.2 q-1.8 -1.2 -3.8 -.2z" fill="#fff"/><circle cx="116.4" cy="1034.8" r="7.6" fill="none" stroke="#f4eef0" stroke-width=".9"/><path d="M132.8 1036.6 l8 -8.4 l4.6 4.6 l-8 8.6z" fill="#f6f2e4" stroke="#181818" stroke-width="1.1"/><path d="M134.6 1038.4 l2.2 -4.2 l2.6 1 l4.2 -5 l-2 4.4 l-2.6 -1z" fill="#f09a18" stroke="#e8a020" stroke-width="1.6" stroke-linejoin="round"/><circle cx="161.6" cy="1035.4" r="5.2" fill="none" stroke="#3ca8f4" stroke-width="3"/><path d="M157 1035.4 h9.6" stroke="#3ca8f4" stroke-width="2.4"/><path d="M162 1039 l6 -2 v5z" fill="#2a62d8"/><path d="M154.6 1042.4 q-1.6 -6 5 -11.6 q5 -3.800 8.400 -2.600" fill="none" stroke="#58b8f8" stroke-width="1.4"/></svg>
 <div class="abs" style="left:181px;top:1px;color:#d4e6ff;font-size:13px;font-weight:bold;line-height:16px;letter-spacing:-1px">»</div>
 
 <div class="tb" style="left:198px;width:157px"><svg class="abs" style="left:9px;top:5px" width="16" height="14"><path d="M1 3 h5 l2 2 h7 v8 h-14z" fill="#f0d060" stroke="#a08020" stroke-width="1"/><path d="M1 13 l3 -6 h12 l-3 6z" fill="#fbe78a" stroke="#a08020" stroke-width="1"/></svg>Osa103</div>
 <div class="tb act" style="left:357px;width:159px;padding-left:30px"><svg class="abs" style="left:11px;top:5px" width="15" height="15" viewBox="0 0 16 16"><rect width="16" height="16" fill="url(#ig)"/><path d="M1 8 H3 V11.400 H5.300 V3.600 H7.700 V11.400 H10.300 V3.600 H12.900 V8 H15" fill="none" stroke="#e6f020" stroke-width="1.300"/></svg>OSA103 F 3.37</div>
 <div class="tb" style="left:518px;width:158px"><svg class="abs" style="left:9px;top:4px" width="16" height="17"><path d="M4 7 h8 l-1 9 h-6z" fill="#d8d0c0" stroke="#605040" stroke-width="1"/><path d="M5 7 l-2 -6 M8 7 v-6 M11 7 l2 -5" stroke="#c04020" stroke-width="1.6"/><path d="M6.5 7 l-.5 -5" stroke="#e0c020" stroke-width="1.4"/><path d="M9.5 7 l1 -5" stroke="#3070d0" stroke-width="1.4"/></svg>Безымянный - Paint</div>
 <div class="abs" style="left:1299px;top:9px;color:#fff;font-size:11px">EN</div>
 <div id="tray" class="abs"></div>
 <svg class="abs" style="left:1310px;top:0" width="50" height="30" viewBox="1310 1020 50 30"><defs><radialGradient id="cg" cx=".35" cy=".3" r=".8"><stop offset="0" stop-color="#5ab4f8"/><stop offset="1" stop-color="#1468e0"/></radialGradient></defs><circle cx="1325.700" cy="1035.700" r="8" fill="url(#cg)" stroke="#a8d4fc" stroke-width="1"/><path d="M1327.800 1031.600 l-4.200 4.100 l4.200 4.100" fill="none" stroke="#fff" stroke-width="2.200"/><path d="M1340.300 1027.400 h10.600 v15 h-10.600 a4 4 0 0 1 -4 -4 v-7 a4 4 0 0 1 4 -4z M1344.200 1032 a3.700 3.700 0 1 0 .01 0z" fill="#a0148c" fill-rule="evenodd"/></svg>
 <div class="abs" style="left:1359px;top:9px;color:#fff;font-size:11px;letter-spacing:-.3px">16:31</div>
</div>
</div></body></html>
